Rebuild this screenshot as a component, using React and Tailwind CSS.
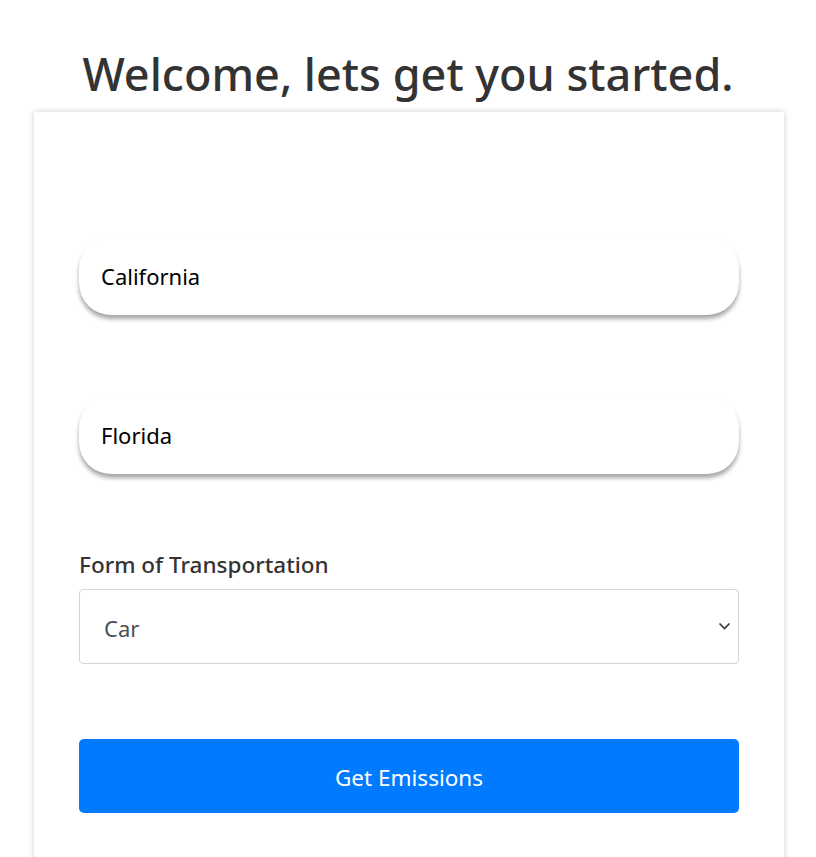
import { useState } from "react";

function App() {
  const [origin, setOrigin] = useState("California");
  const [dest, setDest] = useState("Florida");
  const [mode, setMode] = useState("Car");

  return (
    <div className="min-h-screen bg-white font-['Noto_Sans',sans-serif] text-[#333]">
      <h1 className="pt-[42px] pb-[6px] text-center text-[45px] font-medium leading-[64px] text-[#333]">
        Welcome, lets get you started.
      </h1>

      <div className="ml-[34px] mr-[32px] min-h-[760px] bg-white px-[45px] pt-[125px] shadow-[0_0_6px_rgba(0,0,0,0.2)]">
        <input
          value={origin}
          onChange={(e) => setOrigin(e.target.value)}
          className="block h-[78px] w-full rounded-[32px] bg-white px-[22px] text-[22px] text-black shadow-[0_4px_4px_rgba(0,0,0,0.35)] outline-none"
        />

        <input
          value={dest}
          onChange={(e) => setDest(e.target.value)}
          className="mt-[81px] block h-[78px] w-full rounded-[32px] bg-white px-[22px] text-[22px] text-black shadow-[0_4px_4px_rgba(0,0,0,0.35)] outline-none"
        />

        <label className="mt-[76px] block text-[22.5px] font-medium leading-[30px] text-[#333]">
          Form of Transportation
        </label>
        <div className="relative mt-[9px]">
          <select
            value={mode}
            onChange={(e) => setMode(e.target.value)}
            className="block h-[75px] w-full appearance-none rounded-[4px] border border-[#ced4da] bg-white px-[24px] pt-[3px] text-[22px] text-[#495057] outline-none"
          >
            <option>Car</option>
            <option>Bus</option>
            <option>Train</option>
            <option>Plane</option>
          </select>
          <svg
            className="pointer-events-none absolute right-[8px] top-[33px]"
            width="13"
            height="9"
            viewBox="0 0 13 9"
            fill="none"
            stroke="#343a40"
            strokeWidth="1.7"
          >
            <path d="M1.5 1.5 6.5 6.5l5-5" />
          </svg>
        </div>

        <button className="mt-[75px] block h-[74px] w-full rounded-[5px] bg-[#007bff] pt-[3px] text-[22.5px] text-white">
          Get Emissions
        </button>
      </div>
    </div>
  );
}

export default App;
